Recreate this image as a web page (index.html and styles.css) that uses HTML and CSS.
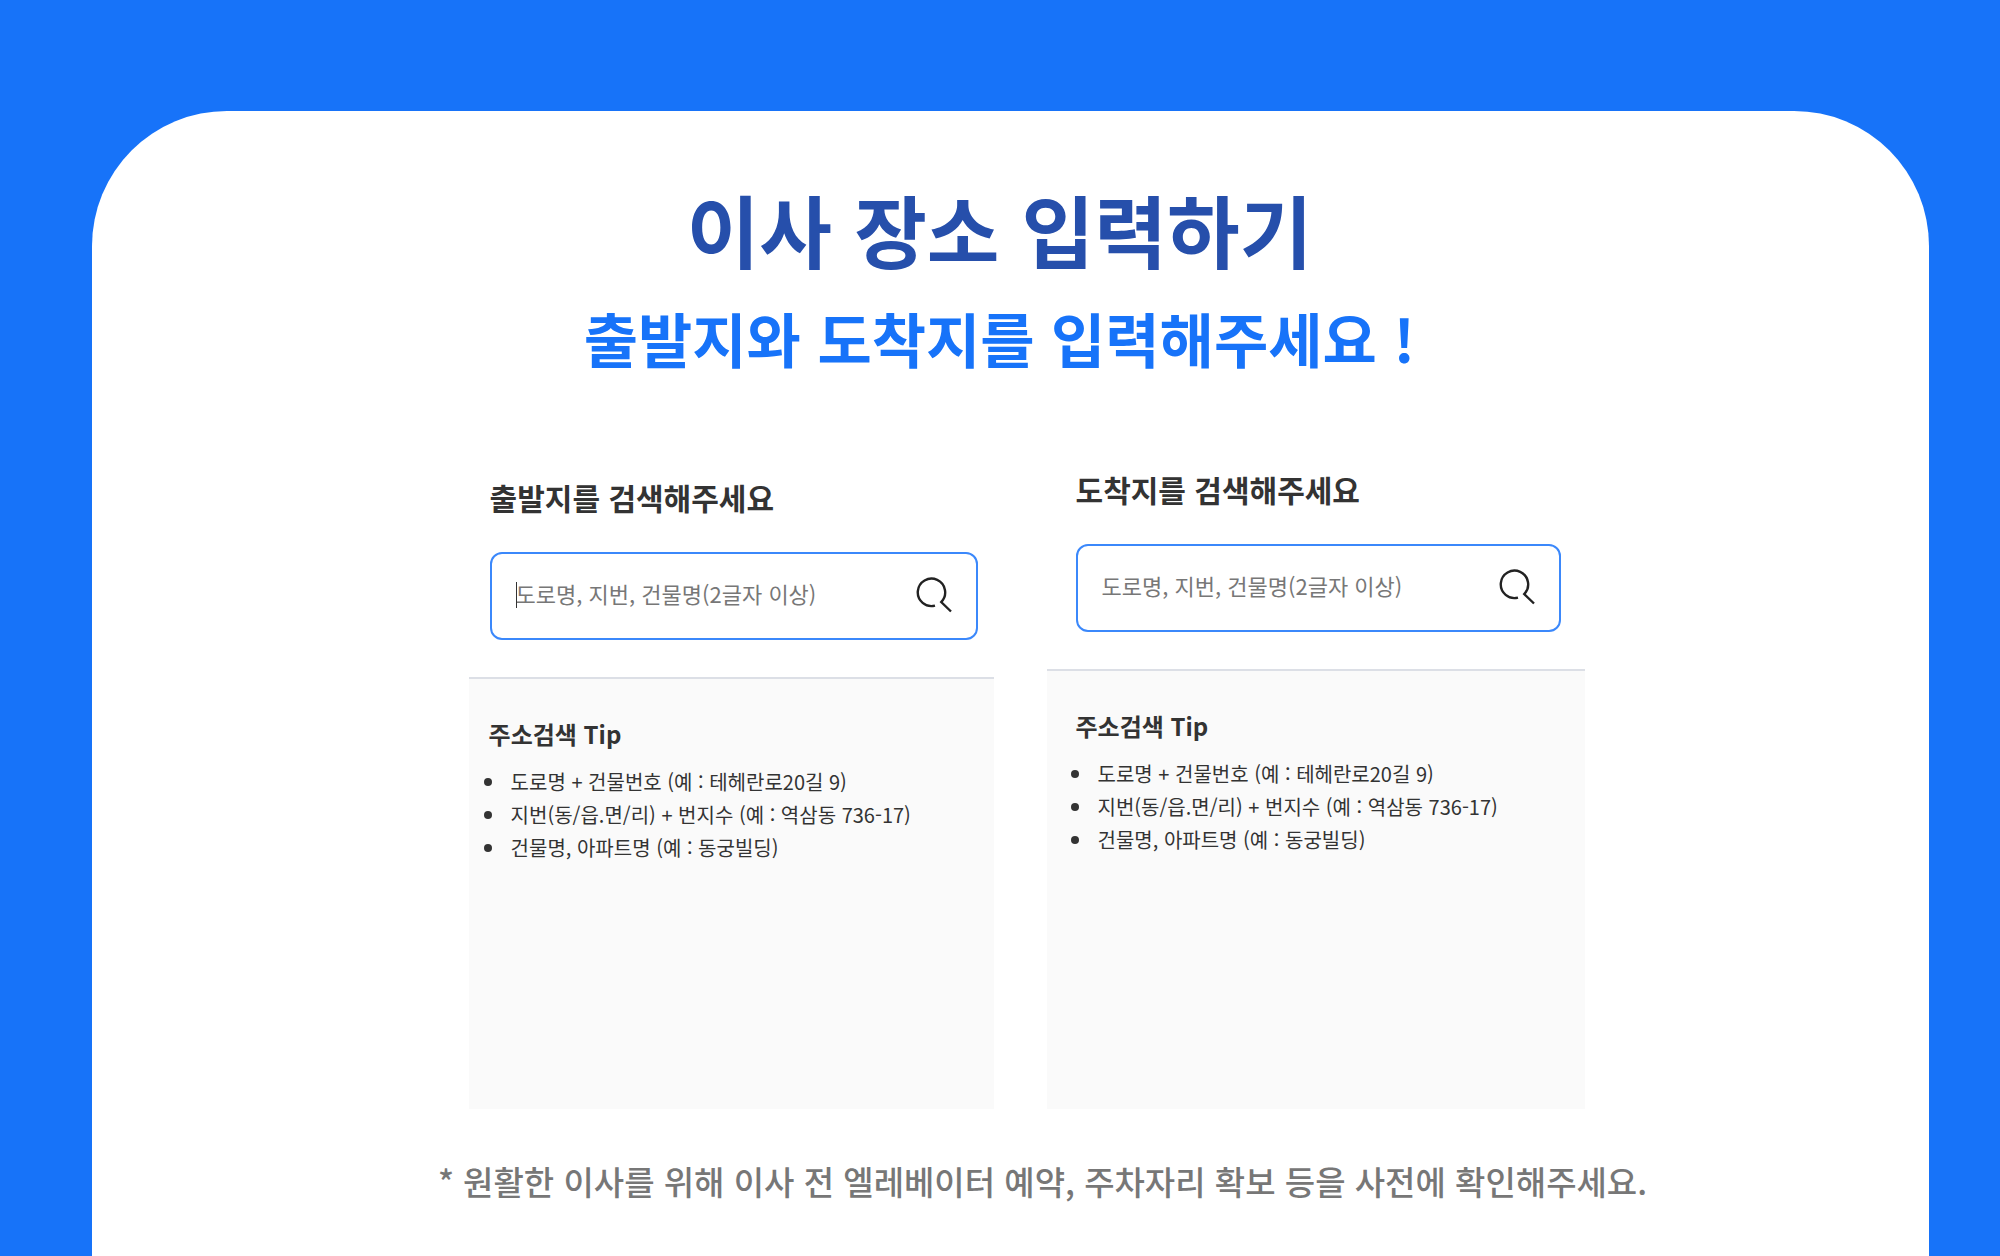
FILE: index.html
```html
<!DOCTYPE html>
<html lang="ko">
<head>
    <meta charset="UTF-8">
    <meta name="viewport" content="width=device-width, initial-scale=1.0">
    <title>이사 장소 입력하기</title>
    <link rel="stylesheet" href="styles.css">
</head>
<body>
    <main class="sheet">
        <div class="header">
            <h1>이사 장소 입력하기</h1>
            <p>출발지와 도착지를 입력해주세요 !</p>
        </div>
        <div class="places">
            <section class="place departure">
                <form class="search">
                    <label for="departure">출발지를 검색해주세요</label>
                    <div class="search-box">
                        <input type="text" id="departure" placeholder="도로명, 지번, 건물명(2글자 이상)">
                        <span class="caret"></span>
                        <button type="button" class="search-btn" aria-label="출발지 검색">
                            <svg viewBox="0 0 36 38" width="36" height="38">
                                <path d="M19 28.6A13.7 13.7 0 1 1 25.2 25L35 34.5M25.2 25L24.8 24.2"/>
                            </svg>
                        </button>
                    </div>
                </form>
                <div class="tips">
                    <h2>주소검색 Tip</h2>
                    <ul>
                        <li>도로명 + 건물번호 (예 : 테헤란로20길 9)</li>
                        <li>지번(동/읍.면/리) + 번지수 (예 : 역삼동 736-17)</li>
                        <li>건물명, 아파트명 (예 : 동궁빌딩)</li>
                    </ul>
                </div>
            </section>
            <section class="place arrival">
                <form class="search">
                    <label for="arrival">도착지를 검색해주세요</label>
                    <div class="search-box">
                        <input type="text" id="arrival" placeholder="도로명, 지번, 건물명(2글자 이상)">
                        <button type="button" class="search-btn" aria-label="도착지 검색">
                            <svg viewBox="0 0 36 38" width="36" height="38">
                                <path d="M19 28.6A13.7 13.7 0 1 1 25.2 25L35 34.5M25.2 25L24.8 24.2"/>
                            </svg>
                        </button>
                    </div>
                </form>
                <div class="tips">
                    <h2>주소검색 Tip</h2>
                    <ul>
                        <li>도로명 + 건물번호 (예 : 테헤란로20길 9)</li>
                        <li>지번(동/읍.면/리) + 번지수 (예 : 역삼동 736-17)</li>
                        <li>건물명, 아파트명 (예 : 동궁빌딩)</li>
                    </ul>
                </div>
            </section>
        </div>
        <p class="notice">* 원활한 이사를 위해 이사 전 엘레베이터 예약, 주차자리 확보 등을 사전에 확인해주세요.</p>
    </main>
</body>
</html>
```
FILE: styles.css
```css
* {
    box-sizing: border-box;
    margin: 0;
    padding: 0;
}
body {
    display: flex;
    min-height: 100vh;
    padding: 111px 71px 0 92px;
    background-color: #1773f9;
    font-family: "Noto Sans CJK KR", sans-serif;
    color: #333;
}
.sheet {
    flex: 1;
    padding-top: 68px;
    border-radius: 135px 135px 0 0;
    background-color: white;
}
.header {
    padding-right: 22px;
    text-align: center;
}
.header h1 {
    font-size: 79px;
    line-height: 100px;
    font-weight: bold;
    color: #264fab;
}
.header p {
    margin-top: 19px;
    font-size: 59px;
    line-height: 80px;
    font-weight: bold;
    color: #1773f9;
}
.places {
    display: grid;
    grid-template-columns: 525fr 539fr;
    gap: 53px;
    margin-top: 91px;
    padding: 0 18.7% 0 20.5%;
}
.place {
    display: flex;
    flex-direction: column;
}
.departure {
    padding-top: 8px;
}
.search {
    padding: 0 16px 37px 21px;
}
.arrival .search {
    padding: 0 24px 37px 29px;
}
.search label {
    display: block;
    font-size: 30px;
    line-height: 40px;
    font-weight: bold;
}
.search-box {
    position: relative;
    display: flex;
    align-items: center;
    height: 88px;
    margin-top: 35px;
    padding: 0 24px;
    border: 2px solid #3b88fb;
    border-radius: 12px;
    background-color: white;
}
.search-box input {
    flex: 1;
    min-width: 0;
    padding-bottom: 6px;
    border: none;
    outline: none;
    background: none;
    font-family: inherit;
    font-size: 22px;
    line-height: 32px;
    color: #333;
}
.search-box input::placeholder {
    color: #777;
    opacity: 1;
}
.caret {
    position: absolute;
    left: 24px;
    top: 28px;
    width: 1px;
    height: 26px;
    background-color: #333;
}
.search-btn {
    display: flex;
    border: none;
    background: none;
    cursor: pointer;
}
.search-btn path {
    fill: none;
    stroke: #222;
    stroke-width: 2.4;
}
.tips {
    flex: 1;
    min-height: 432px;
    padding: 38px 20px;
    border-top: 2px solid #dcdfe6;
    background-color: #fafafa;
}
.arrival .tips {
    padding-left: 29px;
}
.tips h2 {
    font-size: 24px;
    line-height: 34px;
    font-weight: bold;
}
.tips ul {
    margin-top: 14px;
    list-style: none;
}
.tips li {
    display: flex;
    align-items: center;
    gap: 19px;
    margin-left: -5px;
    font-size: 20px;
    line-height: 33px;
}
.tips li::before {
    content: "";
    width: 8px;
    height: 8px;
    border-radius: 50%;
    background-color: #333;
}
.notice {
    padding: 48px 0 48px 64px;
    font-size: 33px;
    line-height: 48px;
    font-weight: 500;
    text-align: center;
    color: #777;
}
```
